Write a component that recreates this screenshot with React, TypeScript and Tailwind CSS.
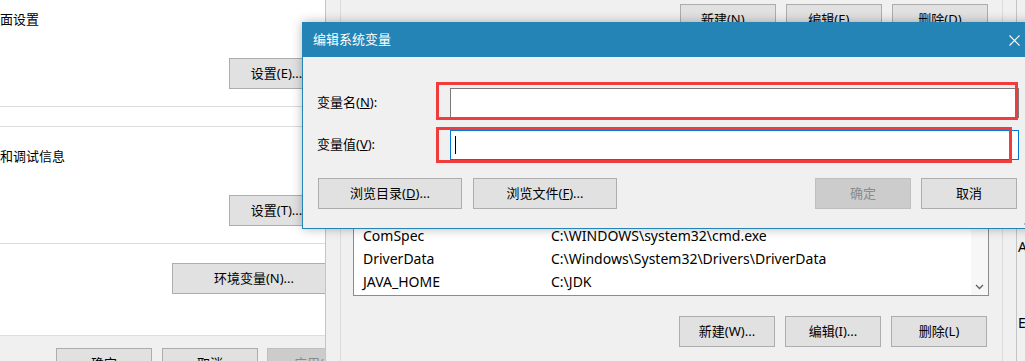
import React from "react";

function WinButton({
  label,
  className = "",
  disabled = false,
}: {
  label: React.ReactNode;
  className?: string;
  disabled?: boolean;
}) {
  return (
    <div
      className={`flex h-[31px] shrink-0 items-center justify-center border text-[13px] ${
        disabled ? "border-[#bfbfbf] bg-[#cccccc] text-[#8a8a8a]" : "border-[#adadad] bg-[#e1e1e1] text-black"
      } ${className}`}
    >
      {label}
    </div>
  );
}

const rows = [
  { name: "ComSpec", value: "C:\\WINDOWS\\system32\\cmd.exe" },
  { name: "DriverData", value: "C:\\Windows\\System32\\Drivers\\DriverData" },
  { name: "JAVA_HOME", value: "C:\\JDK" },
];

function SystemProperties() {
  return (
    <div className="absolute left-0 top-0 flex h-[361px] w-[340px] flex-col bg-[#f0f0f0]">
      <div className="flex h-[336px] shrink-0 flex-col border-b border-[#dfdfdf] bg-white">
        <div className="flex h-[107px] shrink-0 flex-col border-b border-[#dcdcdc]">
          <p className="mt-[10px] h-[18px] text-[13px] leading-[18px]">面设置</p>
          <WinButton label="设置(E)..." className="ml-[229px] mt-[30px] w-[95px]" />
        </div>
        <div className="mt-[19px] flex h-[118px] shrink-0 flex-col border-y border-[#dcdcdc]">
          <p className="mt-[20px] h-[18px] text-[13px] leading-[18px]">和调试信息</p>
          <WinButton label="设置(T)..." className="ml-[229px] mt-[30px] w-[95px]" />
        </div>
        <WinButton label="环境变量(N)..." className="ml-[172px] mt-[19px] w-[164px]" />
      </div>
      <div className="mt-[12px] flex shrink-0">
        <WinButton label="确定" className="ml-[56px] w-[96px]" />
        <WinButton label="取消" className="ml-[10px] w-[96px]" />
        <WinButton label="应用(A)" disabled className="ml-[9px] w-[96px]" />
      </div>
    </div>
  );
}

function EnvironmentVariables() {
  return (
    <div className="absolute left-[325px] top-0 flex h-[361px] w-[692px] flex-col border-x border-[#c4c4c4] bg-[#f0f0f0] pl-[14px] pr-[13px]">
      <div className="flex h-[46px] shrink-0 items-start justify-end gap-[10px] border-x border-b border-[#dcdcdc] pr-[14px] pt-[4px]">
        <WinButton label="新建(N)..." className="w-[96px]" />
        <WinButton label="编辑(E)..." className="w-[96px]" />
        <WinButton label="删除(D)" className="w-[96px]" />
      </div>
      <div className="mt-[14px] flex flex-1 flex-col border-x border-t border-[#dcdcdc] pl-[12px] pr-[13px]">
        <div className="mt-[19px] flex h-[216px] shrink-0 border border-[#8c8c8c] bg-white">
          <div className="flex flex-1 flex-col justify-end overflow-hidden pb-[2px] text-[14px]">
            {rows.map((r) => (
              <div key={r.name} className="flex h-[23px] shrink-0 items-center">
                <span className="w-[197px] shrink-0 pl-[9px]">{r.name}</span>
                <span className="whitespace-nowrap">{r.value}</span>
              </div>
            ))}
          </div>
          <div className="flex w-[17px] flex-col justify-end bg-[#f7f7f7]">
            <div className="flex h-[17px] items-center justify-center">
              <svg width="9" height="6" viewBox="0 0 9 6">
                <polyline points="1,1 4.5,4.5 8,1" fill="none" stroke="#606060" strokeWidth="1.3" />
              </svg>
            </div>
          </div>
        </div>
        <div className="mt-[20px] flex shrink-0 justify-end gap-[10px] pr-[2px]">
          <WinButton label="新建(W)..." className="w-[96px]" />
          <WinButton label="编辑(I)..." className="w-[96px]" />
          <WinButton label="删除(L)" className="w-[96px]" />
        </div>
      </div>
    </div>
  );
}

function EditDialog() {
  return (
    <div className="absolute left-[302px] top-[22px] flex h-[207px] w-[736px] flex-col border border-[#2384b5] bg-[#f0f0f0] shadow-[0_0_10px_rgba(0,0,0,0.28)]">
      <div className="flex h-[34px] shrink-0 items-center justify-between bg-[#2384b5] pl-[10px] text-white">
        <span className="text-[13px]">编辑系统变量</span>
        <div className="flex h-full w-[46px] items-center justify-center">
          <svg width="11" height="11" viewBox="0 0 11 11">
            <path d="M0.5 0.5 L10.5 10.5 M10.5 0.5 L0.5 10.5" stroke="white" strokeWidth="1.1" />
          </svg>
        </div>
      </div>
      <div className="flex flex-1 flex-col pl-[14px] pr-[18px] text-[13px]">
        <div className="mt-[31px] flex h-[30px] items-center">
          <span className="w-[133px] shrink-0">
            变量名(<span className="underline">N</span>):
          </span>
          <div className="h-full flex-1 border border-[#7a7a7a] bg-white" />
        </div>
        <div className="mt-[12px] flex h-[30px] items-center">
          <span className="w-[133px] shrink-0">
            变量值(<span className="underline">V</span>):
          </span>
          <div className="flex h-full flex-1 items-center border border-[#0078d7] bg-white pl-[4px]">
            <div className="h-[18px] w-px bg-black" />
          </div>
        </div>
        <div className="mt-[18px] flex pr-[2px]">
          <WinButton
            label={
              <>
                浏览目录(<span className="underline">D</span>)...
              </>
            }
            className="ml-px w-[144px]"
          />
          <WinButton
            label={
              <>
                浏览文件(<span className="underline">F</span>)...
              </>
            }
            className="ml-[11px] w-[144px]"
          />
          <div className="flex-1" />
          <WinButton label="确定" disabled className="w-[96px]" />
          <WinButton label="取消" className="ml-[10px] w-[96px]" />
        </div>
      </div>
      <svg className="absolute bottom-[2px] right-[2px]" width="12" height="12" viewBox="0 0 12 12">
        <rect x="9" y="1" width="2" height="2" fill="#b8b8b8" />
        <rect x="5" y="5" width="2" height="2" fill="#b8b8b8" />
        <rect x="9" y="5" width="2" height="2" fill="#b8b8b8" />
        <rect x="1" y="9" width="2" height="2" fill="#b8b8b8" />
        <rect x="5" y="9" width="2" height="2" fill="#b8b8b8" />
        <rect x="9" y="9" width="2" height="2" fill="#b8b8b8" />
      </svg>
    </div>
  );
}

export default function App() {
  return (
    <div className="relative h-[361px] w-[1025px] overflow-hidden bg-[#f0f0f0] font-['Noto_Sans','Noto_Sans_CJK_SC',sans-serif] text-black">
      <SystemProperties />
      <div className="absolute left-[1017px] top-0 flex h-[361px] w-[20px] flex-col bg-[#f0f0f0] pl-[1px] text-[14px]">
        <span className="mt-[236px]">Ar</span>
        <span className="mt-[55px]">E9</span>
        <span className="mt-[22px]">A</span>
      </div>
      <EnvironmentVariables />
      <EditDialog />
      <div className="absolute left-[436px] top-[82px] h-[38px] w-[582px] border-[3px] border-[#f03c3c]" />
      <div className="absolute left-[436px] top-[127px] h-[36px] w-[576px] border-[3px] border-[#f03c3c]" />
    </div>
  );
}
